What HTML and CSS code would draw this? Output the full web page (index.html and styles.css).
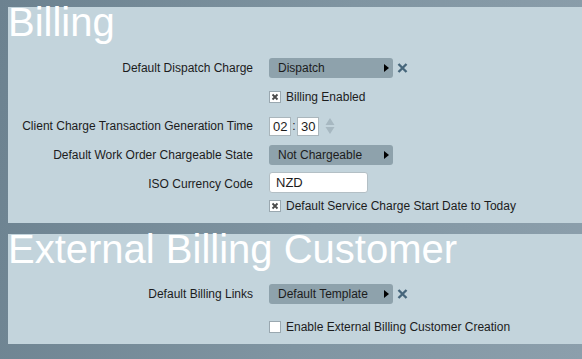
FILE: index.html
```html
<!DOCTYPE html>
<html lang="en">
<head>
  <meta charset="UTF-8" />
  <meta name="viewport" content="width=device-width, initial-scale=1.0"/>
  <title>Billing Settings</title>
  <link rel="stylesheet" href="styles.css">
</head>
<body>
  <section class="panel">
    <h1 class="panel-title">Billing</h1>
    <div class="form">
      <span class="form-label">Default Dispatch Charge</span>
      <div class="form-field">
        <span class="picker">Dispatch<span class="picker-arrow"></span></span>
        <svg class="clear" width="11" height="10" viewBox="0 0 11 10"><path d="M1.5 1 L9.5 9 M9.5 1 L1.5 9" /></svg>
      </div>

      <div class="form-field solo">
        <span class="check"><svg width="10" height="10" viewBox="0 0 10 10"><path d="M2.5 2.5 L7.5 7.5 M7.5 2.5 L2.5 7.5" /></svg></span>
        Billing Enabled
      </div>

      <span class="form-label">Client Charge Transaction Generation Time</span>
      <div class="form-field">
        <span class="time-box">02</span>
        <span class="time-sep">:</span>
        <span class="time-box">30</span>
        <svg class="spinner" width="10" height="18" viewBox="0 0 10 18"><path d="M5 1 L9.5 8 L0.5 8 Z M0.5 10 L9.5 10 L5 17 Z" /></svg>
      </div>

      <span class="form-label">Default Work Order Chargeable State</span>
      <div class="form-field">
        <span class="picker">Not Chargeable<span class="picker-arrow"></span></span>
      </div>

      <span class="form-label row-input">ISO Currency Code</span>
      <div class="form-field row-input">
        <span class="text-input">NZD</span>
      </div>

      <div class="form-field solo row-last">
        <span class="check"><svg width="10" height="10" viewBox="0 0 10 10"><path d="M2.5 2.5 L7.5 7.5 M7.5 2.5 L2.5 7.5" /></svg></span>
        Default Service Charge Start Date to Today
      </div>
    </div>
  </section>

  <section class="panel">
    <h1 class="panel-title">External Billing Customer</h1>
    <div class="form form-loose">
      <span class="form-label">Default Billing Links</span>
      <div class="form-field">
        <span class="picker">Default Template<span class="picker-arrow"></span></span>
        <svg class="clear" width="11" height="10" viewBox="0 0 11 10"><path d="M1.5 1 L9.5 9 M9.5 1 L1.5 9" /></svg>
      </div>

      <div class="form-field solo">
        <span class="check"></span>
        Enable External Billing Customer Creation
      </div>
    </div>
  </section>
</body>
</html>
```

FILE: styles.css
```css
html, body {
  margin: 0;
  padding: 0;
  height: 100%;
  overflow: hidden;
}

body {
  padding-top: 7px;
  box-sizing: border-box;
  background: linear-gradient(100deg, #6c8290 0%, #8095a2 55%, #8c9fac 100%);
  font-family: "Liberation Sans", Arial, sans-serif;
  font-size: 12px;
  color: #1c1c1c;
}

.panel {
  margin-left: 8px;
  padding-bottom: 7px;
  background: #c3d4dc;
}

.panel + .panel {
  margin-top: 11px;
}

.panel-title {
  margin: 0;
  font-size: 40px;
  line-height: 30px;
  font-weight: normal;
  color: #fff;
}

.form {
  display: grid;
  grid-template-columns: 245px auto;
  column-gap: 16px;
  row-gap: 9px;
  margin-top: 21px;
}

.panel + .panel .form {
  margin-top: 20px;
}

.form-loose {
  row-gap: 13px;
}

.form-label {
  grid-column: 1;
  align-self: center;
  text-align: right;
}

.form-field {
  grid-column: 2;
  display: flex;
  align-items: center;
  height: 20px;
}

.form-field.row-input {
  height: 21px;
  margin-top: -2px;
}

.form-field.row-last {
  margin-top: -6px;
}

.picker {
  display: flex;
  align-items: center;
  box-sizing: border-box;
  width: 124px;
  height: 20px;
  padding: 0 4px 0 9px;
  background: #8ea2ac;
  border-radius: 3px;
}

.picker-arrow {
  margin-left: auto;
  width: 0;
  height: 0;
  border-left: 5px solid #000;
  border-top: 4.5px solid transparent;
  border-bottom: 4.5px solid transparent;
}

.clear {
  margin-left: 4px;
}

.clear path {
  stroke: #46667b;
  stroke-width: 2.4;
  fill: none;
}

.check {
  display: inline-flex;
  align-items: center;
  justify-content: center;
  box-sizing: border-box;
  width: 12px;
  height: 12px;
  margin-right: 5px;
  background: #fff;
  border: 1px solid #9aa8b0;
}

.check path {
  stroke: #4a4a4a;
  stroke-width: 1.8;
  fill: none;
}

.time-box {
  box-sizing: border-box;
  width: 22px;
  height: 19px;
  padding: 1px 0 0 3px;
  background: #fff;
  border: 1px solid #aab6bc;
  font-size: 13px;
  line-height: 16px;
}

.time-sep {
  width: 6px;
  text-align: center;
}

.spinner {
  margin-left: 6px;
}

.spinner path {
  fill: #a7b8c1;
}

.text-input {
  box-sizing: border-box;
  width: 99px;
  height: 21px;
  padding: 0 6px;
  background: #fff;
  border: 1px solid #b3bfc5;
  border-radius: 3px;
  font-size: 13px;
  line-height: 19px;
}
```
